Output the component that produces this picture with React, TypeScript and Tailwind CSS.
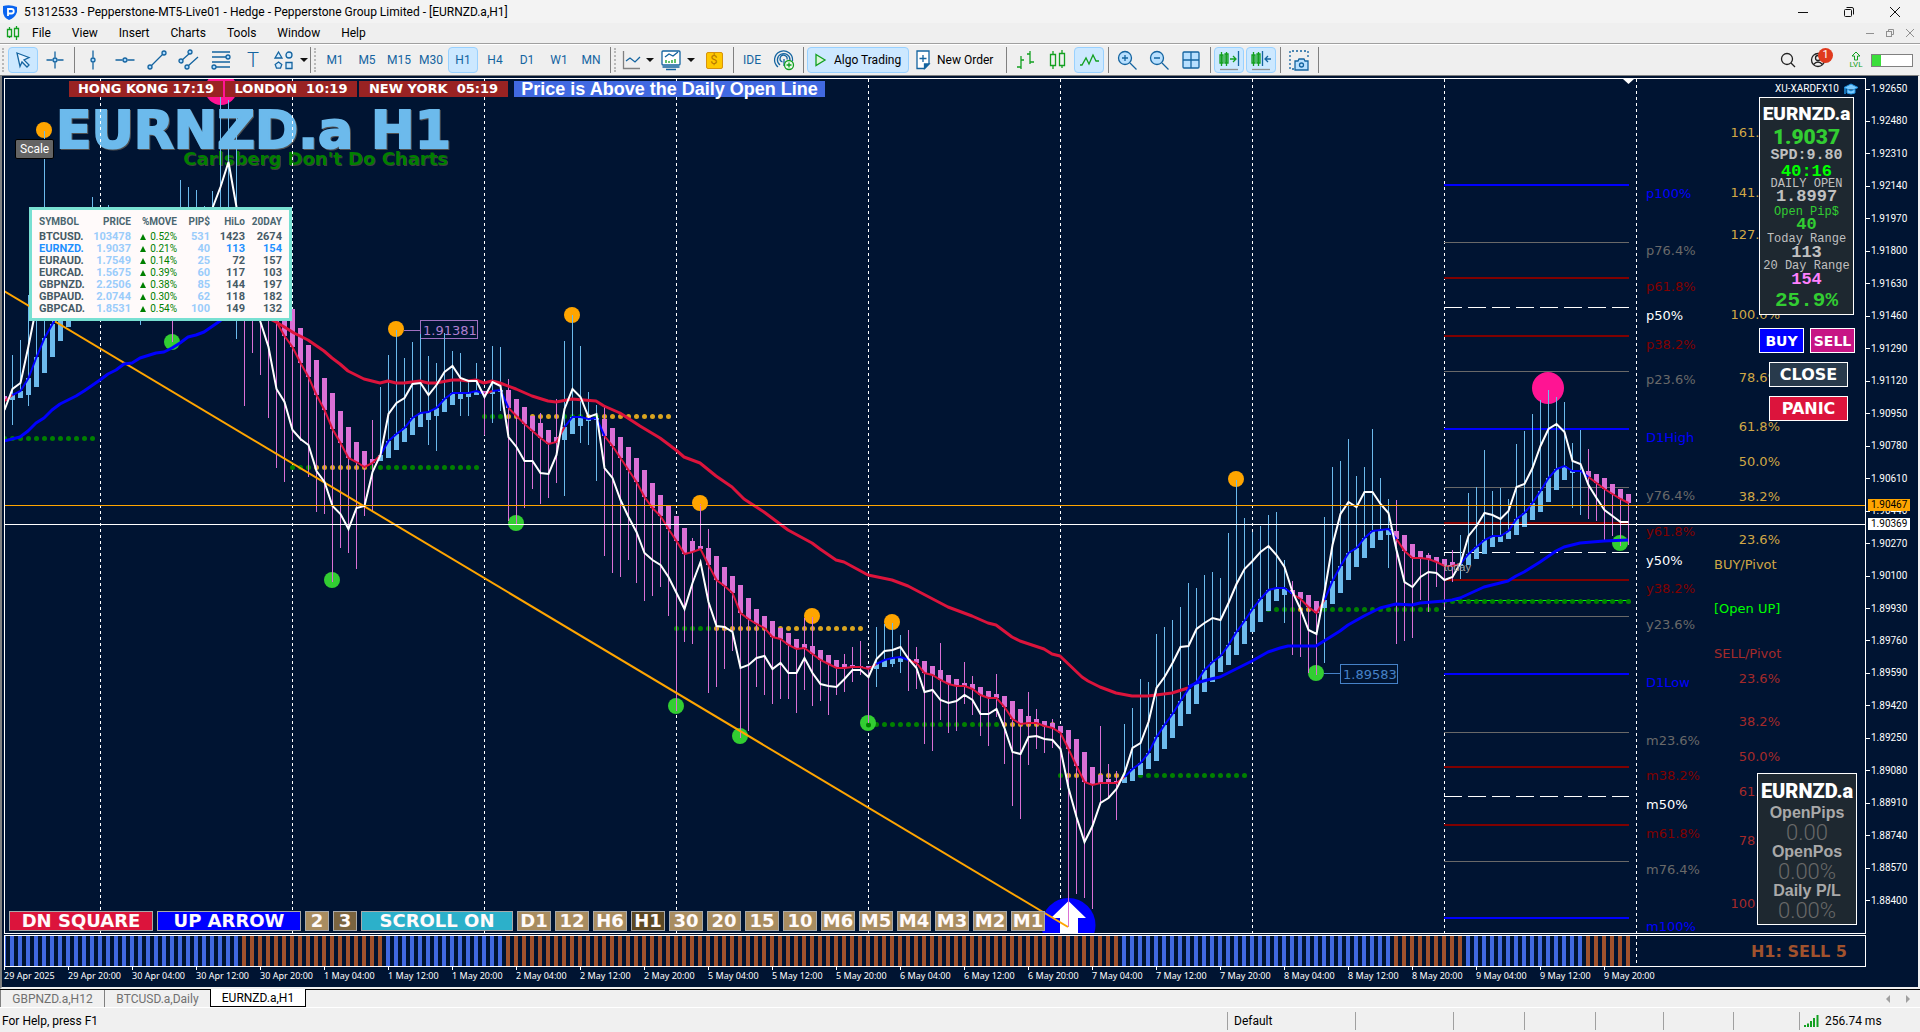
import type { ReactNode } from "react";

// ─────────────────────────────────────────────────────────────
// Chart data. One row per H1 bar, eight pixels apart:
// [wick top, wick bottom, fast average, body edge, close line]
// A body edge above the average is a falling bar, below it a rising one.
// ─────────────────────────────────────────────────────────────

type Bar = [number, number, number, number, number];

const BARS: Bar[] = [
  [396, 400, 401, 396, 410], [355, 425, 395, 400, 389], [340, 398, 391, 398, 383], [295, 406, 378, 395, 346],
  [300, 387, 357, 387, 306], [131, 373, 338, 373, 280], [260, 357, 324, 357, 270], [260, 341, 310, 341, 262],
  [250, 327, 300, 327, 256], [250, 315, 292, 310, 250], [240, 310, 285, 300, 246], [197, 310, 280, 292, 244],
  [240, 300, 276, 286, 244], [205, 300, 272, 282, 244], [240, 300, 270, 280, 246], [240, 300, 268, 278, 248],
  [240, 300, 266, 276, 250], [240, 325, 264, 274, 252], [240, 300, 262, 272, 254], [240, 300, 260, 270, 256],
  [240, 300, 260, 255, 258], [240, 342, 262, 256, 262], [180, 300, 260, 268, 260], [187, 300, 256, 266, 256],
  [190, 300, 250, 262, 250], [206, 300, 246, 258, 240], [191, 300, 240, 254, 208], [96, 300, 236, 250, 187],
  [100, 300, 232, 246, 162], [118, 339, 236, 244, 207], [240, 406, 262, 250, 250], [250, 353, 284, 262, 290],
  [260, 375, 302, 276, 322], [270, 418, 314, 286, 347], [280, 468, 322, 294, 389], [290, 482, 336, 300, 402],
  [309, 440, 347, 309, 430], [328, 441, 363, 328, 439], [345, 477, 377, 345, 445], [360, 512, 395, 360, 471],
  [378, 514, 410, 378, 482], [393, 582, 429, 393, 506], [411, 548, 443, 411, 514], [427, 553, 458, 427, 529],
  [442, 569, 462, 442, 508], [451, 516, 467, 451, 506], [420, 511, 463, 459, 472], [387, 461, 455, 461, 455],
  [355, 458, 441, 458, 414], [330, 450, 434, 450, 403], [358, 442, 428, 442, 398], [342, 435, 418, 435, 384],
  [334, 427, 413, 427, 383], [356, 445, 412, 420, 395], [363, 451, 408, 416, 385], [333, 412, 399, 412, 372],
  [351, 405, 393, 405, 366], [353, 416, 393, 399, 378], [380, 416, 393, 397, 381], [363, 395, 391, 395, 381],
  [391, 435, 394, 391, 397], [346, 423, 391, 394, 382], [347, 411, 390, 392, 386], [379, 521, 408, 390, 437],
  [399, 524, 416, 399, 447], [407, 508, 424, 407, 461], [416, 489, 431, 416, 461], [413, 504, 438, 423, 473],
  [430, 498, 444, 430, 474], [399, 483, 442, 437, 455], [341, 496, 427, 440, 409], [315, 434, 417, 434, 389],
  [346, 443, 417, 426, 397], [392, 445, 419, 421, 417], [405, 481, 418, 420, 414], [407, 556, 436, 419, 468],
  [428, 573, 446, 428, 478], [437, 577, 458, 437, 500], [447, 560, 470, 447, 517], [458, 583, 482, 458, 532],
  [470, 601, 497, 470, 553], [483, 596, 508, 483, 560], [495, 587, 516, 495, 565], [506, 616, 529, 506, 577],
  [516, 711, 541, 516, 593], [528, 642, 554, 528, 609], [538, 644, 552, 541, 583], [504, 550, 549, 546, 562],
  [529, 693, 565, 548, 602], [556, 687, 580, 556, 626], [567, 669, 586, 567, 627], [576, 651, 593, 576, 632],
  [585, 738, 613, 585, 668], [598, 731, 619, 598, 665], [609, 687, 624, 609, 658], [616, 695, 628, 616, 656],
  [621, 704, 637, 621, 669], [628, 699, 639, 628, 663], [633, 699, 645, 633, 673], [639, 713, 649, 639, 673],
  [618, 690, 648, 644, 658], [617, 706, 654, 646, 673], [650, 701, 660, 650, 684], [655, 715, 664, 655, 686],
  [660, 695, 668, 660, 687], [654, 692, 668, 664, 679], [647, 682, 667, 665, 670], [641, 675, 667, 666, 670],
  [666, 723, 669, 666, 677], [627, 687, 664, 669, 659], [624, 667, 660, 667, 651], [623, 667, 658, 664, 650],
  [635, 673, 657, 662, 647], [630, 691, 660, 659, 659], [647, 689, 663, 659, 668], [661, 744, 673, 661, 692],
  [666, 751, 675, 666, 690], [643, 720, 680, 670, 700], [675, 733, 684, 675, 703], [679, 731, 686, 679, 701],
  [662, 704, 686, 683, 695], [676, 715, 689, 684, 700], [687, 736, 695, 687, 714], [691, 746, 698, 691, 714],
  [674, 717, 698, 694, 709], [696, 764, 707, 696, 728], [701, 806, 719, 701, 752], [709, 819, 724, 709, 754],
  [692, 765, 723, 716, 737], [709, 749, 723, 719, 736], [721, 753, 726, 721, 739], [719, 748, 728, 723, 740],
  [726, 788, 733, 726, 749], [730, 927, 749, 730, 788], [739, 894, 766, 739, 817], [752, 898, 782, 752, 842],
  [767, 909, 785, 767, 826], [726, 805, 783, 775, 803], [764, 798, 783, 779, 798], [771, 820, 783, 781, 789],
  [724, 783, 777, 783, 773], [708, 781, 769, 781, 748], [679, 775, 763, 775, 743], [682, 769, 753, 769, 722],
  [634, 761, 737, 761, 688], [627, 749, 725, 749, 677], [620, 738, 714, 738, 663], [607, 726, 701, 726, 647],
  [583, 714, 689, 714, 646], [588, 704, 682, 704, 629], [575, 692, 670, 692, 623], [572, 682, 662, 682, 618],
  [578, 672, 656, 672, 620], [533, 665, 645, 665, 603], [480, 655, 632, 655, 584], [518, 644, 621, 644, 569],
  [532, 632, 609, 632, 561], [526, 622, 599, 622, 552], [515, 611, 590, 611, 546], [512, 601, 588, 601, 555],
  [560, 623, 588, 595, 567], [581, 655, 594, 590, 592], [592, 657, 599, 592, 609], [595, 673, 607, 595, 630],
  [601, 675, 613, 601, 634], [517, 663, 600, 608, 592], [467, 604, 581, 604, 545], [461, 593, 566, 593, 514],
  [439, 580, 553, 580, 502], [476, 567, 548, 567, 507], [467, 558, 538, 558, 492], [429, 548, 531, 548, 492],
  [478, 540, 530, 540, 504], [499, 568, 529, 535, 513], [500, 644, 539, 531, 550], [535, 641, 551, 535, 582],
  [544, 638, 558, 544, 587], [551, 600, 558, 551, 577], [553, 612, 559, 555, 572], [557, 587, 562, 557, 573],
  [559, 607, 566, 559, 580], [550, 582, 566, 562, 577], [535, 579, 564, 566, 563], [493, 565, 554, 565, 536],
  [487, 559, 547, 559, 526], [450, 554, 540, 554, 513], [491, 547, 536, 547, 515], [488, 542, 536, 542, 519],
  [499, 539, 531, 539, 511], [444, 535, 519, 535, 487], [431, 527, 513, 527, 484], [414, 520, 503, 520, 468],
  [400, 512, 491, 512, 446], [390, 502, 478, 502, 429], [397, 490, 469, 490, 424], [402, 480, 466, 480, 432],
  [443, 508, 471, 473, 461], [430, 515, 471, 472, 464], [449, 519, 477, 471, 485], [474, 521, 483, 474, 498],
  [478, 540, 489, 478, 510], [484, 536, 494, 484, 516], [489, 546, 499, 489, 522], [494, 545, 503, 494, 522],
];

const SLOW: { color: string; points: string }[] = [
  {
    color: "#0000ff",
    points:
      "4,441 20,437 28,431 36,423 44,418 52,410 60,404 76,396 84,391 100,380 108,374 116,370 124,364 132,363 140,358 156,353 164,352 172,348 180,343 188,337 196,335 204,332 220,321 236,305",
  },
  {
    color: "#dc143c",
    points:
      "260,314 276,322 286,328 294,333 308,340 324,351 332,358 340,364 348,371 364,379 372,381 380,383 388,381 396,383 404,383 420,381 428,383 436,383 452,380 460,380 468,381 476,380 484,383 492,381 500,383 516,389 532,396 548,401 556,402 572,399 596,401 604,406 620,413 640,426 660,438 676,450 684,457 700,463 716,476 732,487 744,499 764,512 788,530 812,543 820,549 836,560 844,562 868,575 892,580 908,586 948,607 972,616 988,623 996,625 1012,637 1020,641 1044,649 1052,654 1060,656 1082,677 1088,681 1100,687 1116,693 1132,696 1148,696 1172,693 1188,688",
  },
  {
    color: "#0000ff",
    points:
      "1188,687 1196,683 1211,679 1220,677 1236,669 1252,661 1268,652 1280,648 1288,646 1316,646 1332,636 1340,631 1348,625 1364,616 1380,608 1396,604 1412,605 1420,603 1444,601 1452,600 1460,598 1484,587 1508,581 1516,576 1524,572 1540,562 1556,551 1564,547 1580,543 1604,541 1628,540",
  },
];

// Daily open dots: y, first bar, and one letter per bar (g = above, y = below)
const OPEN_DOTS: [number, number, string][] = [
  [438, 0, "gggggggggggg"],
  [467, 36, "gggyyyyyyygggggggggggggg"],
  [416, 60, "gggyyyyyyygggygyyyyyyyyy"],
  [628, 84, "gggggyyyyyyyyyyyyyyyyyyy"],
  [724, 108, "gggggggggggggggggyyyyyyy"],
  [775, 132, "gyyyyyyygggggggggggggggg"],
  [609, 156, "ggggggyygggggggggggggggg"],
  [601, 180, "gggggggggggggggggggggggg"],
];

const MARKERS: [number, number, number, string][] = [
  [221, 89, 16, "#ff1493"], [1548, 388, 16, "#ff1493"],
  [44, 130, 8, "#ffa500"], [396, 329, 8, "#ffa500"], [572, 315, 8, "#ffa500"], [700, 503, 8, "#ffa500"],
  [812, 616, 8, "#ffa500"], [892, 622, 8, "#ffa500"], [1236, 479, 8, "#ffa500"],
  [172, 342, 8, "#32cd32"], [332, 580, 8, "#32cd32"], [516, 523, 8, "#32cd32"], [676, 706, 8, "#32cd32"],
  [740, 736, 8, "#32cd32"], [868, 723, 8, "#32cd32"], [1316, 673, 8, "#32cd32"], [1620, 543, 8, "#32cd32"],
];

const BLUE = "#0000ff";
const MAROON = "#800000";
const GREY = "#696969";

const LEVELS: [string, number, string][] = [
  ["p100%", 185, BLUE], ["p76.4%", 242, GREY], ["p61.8%", 278, MAROON], ["p50%", 307, "#ffffff"],
  ["p38.2%", 336, MAROON], ["p23.6%", 371, GREY], ["D1High", 429, BLUE], ["y76.4%", 487, GREY],
  ["y61.8%", 523, MAROON], ["y50%", 552, "#ffffff"], ["y38.2%", 580, MAROON], ["y23.6%", 616, GREY],
  ["D1Low", 674, BLUE], ["m23.6%", 732, GREY], ["m38.2%", 767, MAROON], ["m50%", 796, "#ffffff"],
  ["m61.8%", 825, MAROON], ["m76.4%", 861, GREY], ["m100%", 918, BLUE],
];

const PIVOTS: [string, number, string][] = [
  ["161.8%", 132, "#d0a846"], ["141.4%", 192, "#d0a846"], ["127.2%", 234, "#d0a846"], ["100.0%", 314, "#d0a846"],
  ["78.6%", 377, "#d0a846"], ["61.8%", 426, "#d0a846"], ["50.0%", 461, "#d0a846"], ["38.2%", 496, "#d0a846"],
  ["23.6%", 539, "#d0a846"], ["23.6%", 678, "#a52a2a"], ["38.2%", 721, "#a52a2a"], ["50.0%", 756, "#a52a2a"],
  ["61.8%", 791, "#a52a2a"], ["78.6%", 840, "#a52a2a"], ["100.0%", 903, "#a52a2a"],
];

const SYMBOL_ROWS = [
  ["BTCUSD.", "103478", "0.52%", "531", "1423", "2674"],
  ["EURNZD.", "1.9037", "0.21%", "40", "113", "154"],
  ["EURAUD.", "1.7549", "0.14%", "25", "72", "157"],
  ["EURCAD.", "1.5675", "0.39%", "60", "117", "103"],
  ["GBPNZD.", "2.2506", "0.38%", "85", "144", "197"],
  ["GBPAUD.", "2.0744", "0.30%", "62", "118", "182"],
  ["GBPCAD.", "1.8531", "0.54%", "100", "149", "132"],
];

const TIMES = [
  "29 Apr 2025", "29 Apr 20:00", "30 Apr 04:00", "30 Apr 12:00", "30 Apr 20:00",
  ...["1", "2", "5", "6", "7", "8", "9"].flatMap((d) => [`${d} May 04:00`, `${d} May 12:00`, `${d} May 20:00`]),
];

const PRICES = Array.from({ length: 26 }, (_, i) => (1.9265 - i * 0.0017).toFixed(5));

const TIMEFRAMES = ["M1", "M5", "M15", "M30", "H1", "H4", "D1", "W1", "MN"];
const MENUS = ["File", "View", "Insert", "Charts", "Tools", "Window", "Help"];
const TF_BUTTONS = ["D1", "12", "H6", "H1", "30", "20", "15", "10", "M6", "M5", "M4", "M3", "M2", "M1"];

const barX = (i: number) => 4.5 + i * 8;
const isUp = (b: Bar) => b[3] > b[2];

// Splits the fast average into runs of one direction so each gets its own colour.
function fastRuns() {
  const runs: { up: boolean; points: string[] }[] = [];
  BARS.forEach((b, i) => {
    const pt = `${barX(i)},${b[2]}`;
    const last = runs[runs.length - 1];
    if (last && last.up === isUp(b)) last.points.push(pt);
    else {
      if (last) last.points.push(pt);
      runs.push({ up: isUp(b), points: [pt] });
    }
  });
  return runs;
}

function PriceChart() {
  return (
    <svg
      viewBox="5 79 1860 854"
      preserveAspectRatio="none"
      className="block h-full w-full"
      role="img"
      aria-label="EURNZD.a H1 price chart"
    >
      <g className="font-['DejaVu_Sans',sans-serif]" fontWeight="bold">
        <text x="56" y="148" fontSize="52" fill="#6cbaec" stroke="#6cbaec" strokeWidth="2" className="drop-shadow-[1px_1px_0_#505050]">
          EURNZD.a H1
        </text>
        <text x="448" y="165" fontSize="18" fill="#008000" textAnchor="end" className="drop-shadow-[1px_1px_0_#404040]">
          Carlsberg Don't Do Charts
        </text>
      </g>

      <g stroke="#fff" strokeWidth="1" strokeDasharray="3 3" shapeRendering="crispEdges">
        {[100, 292, 484, 676, 868, 1060, 1252, 1444, 1636].map((x) => (
          <line key={x} x1={x + 0.5} x2={x + 0.5} y1="79" y2="933" />
        ))}
      </g>

      {/* Fibonacci levels */}
      <g shapeRendering="crispEdges">
        {LEVELS.map(([label, y, color]) => {
          const thick = color === BLUE || color === MAROON;
          return (
            <line
              key={label}
              x1="1444"
              x2="1629"
              y1={thick ? y : y + 0.5}
              y2={thick ? y : y + 0.5}
              stroke={color}
              strokeWidth={thick ? 2 : 1}
              strokeDasharray={color === "#ffffff" ? "18 6" : undefined}
            />
          );
        })}
        <line x1="1444" x2="1629" y1="600.5" y2="600.5" stroke="#00ff00" />
      </g>

      <g className="font-['DejaVu_Sans',sans-serif]" fontSize="13">
        {LEVELS.map(([label, y, color]) => (
          <text key={label} x="1646" y={y + 13} fill={color}>{label}</text>
        ))}
        {PIVOTS.map(([label, y, color]) => (
          <text key={y} x="1780" y={y + 5} fill={color} textAnchor="end">{label}</text>
        ))}
        <text x="1714" y="569" fill="#d0a846">BUY/Pivot</text>
        <text x="1714" y="613" fill="#00ff00">[Open UP]</text>
        <text x="1714" y="658" fill="#a52a2a">SELL/Pivot</text>
        <g stroke="#a070c0" fill="none" shapeRendering="crispEdges">
          <path d="M404 330.5H420M420.5 320.5h57v18h-57z" />
          <path d="M1324 673.5H1340M1340.5 664.5h57v19h-57z" stroke="#4682c8" />
        </g>
        <text x="423" y="335" fill="#b07fd0">1.91381</text>
        <text x="1343" y="679" fill="#4682c8">1.89583</text>
      </g>

      {OPEN_DOTS.map(([y, start, marks]) =>
        marks.split("").map((m, k) => (
          <circle key={`${y}-${k}`} cx={barX(start + k)} cy={y + 0.5} r="2.5" fill={m === "g" ? "#008000" : "#daa520"} />
        )),
      )}

      {MARKERS.map(([x, y, r, color]) => (
        <circle key={`${x}-${y}`} cx={x} cy={y} r={r} fill={color} />
      ))}
      <circle cx="868.5" cy="725" r="2.5" fill="#008000" />
      <circle cx="1068.5" cy="925" r="27" fill="#0000ff" />
      <path d="M1068.5 901L1086 918H1078V934H1060V918H1051Z" fill="#fff" />

      <g shapeRendering="crispEdges">
        {BARS.map((b, i) => {
          const color = isUp(b) ? "#6cbaec" : "#da70d6";
          return (
            <g key={i}>
              <line x1={barX(i)} x2={barX(i)} y1={b[0]} y2={b[1]} stroke={color} />
              <rect x={barX(i) - 2.5} y={Math.min(b[2], b[3])} width="5" height={Math.abs(b[3] - b[2])} fill={color} />
            </g>
          );
        })}
      </g>

      <line x1="4" y1="291" x2="1068" y2="927" stroke="#ffa500" strokeWidth="2" />

      {SLOW.map((s) => (
        <polyline key={s.points} points={s.points} fill="none" stroke={s.color} strokeWidth="3" strokeLinejoin="round" />
      ))}
      {fastRuns().map((run) => (
        <polyline
          key={run.points[0]}
          points={run.points.join(" ")}
          fill="none"
          stroke={run.up ? "#0000ff" : "#dc143c"}
          strokeWidth="2"
        />
      ))}
      <polyline points={BARS.map((b, i) => `${barX(i)},${b[4]}`).join(" ")} fill="none" stroke="#fff" strokeWidth="2" />

      <g shapeRendering="crispEdges">
        <line x1="4" x2="1866" y1="505.5" y2="505.5" stroke="#ffa500" />
        <line x1="4" x2="1866" y1="524.5" y2="524.5" stroke="#fff" />
      </g>
      <text x="1444" y="571" fontSize="11" fill="#a9a9a9" className="font-['Liberation_Sans',sans-serif]">today</text>
      <path d="M1623 79h11l-5.500 5z" fill="#fff" />
    </svg>
  );
}

// ─────────────────────────────────────────────────────────────
// Chart overlays
// ─────────────────────────────────────────────────────────────

function SessionBar() {
  return (
    <div className="absolute top-0.5 left-16 flex h-4 items-center gap-0.5 font-['DejaVu_Sans',sans-serif] text-[13px] leading-4 font-bold whitespace-pre text-white">
      <span className="w-[154px] bg-[#992323] text-center">HONG KONG 17:19</span>
      <span className="w-[132px] bg-[#992323] text-center">LONDON  10:19</span>
      <span className="w-[149px] bg-[#992323] text-center">NEW YORK  05:19</span>
      <span className="ml-1 w-[311px] bg-[#4169e1] text-center font-['Liberation_Sans',sans-serif] text-lg leading-4 font-bold">
        Price is Above the Daily Open Line
      </span>
    </div>
  );
}

function SymbolTable() {
  const cell = "p-0 text-right leading-3";
  return (
    <div className="absolute top-32 left-6 w-[263px] border-[3px] border-[#78e0d2] bg-[#fffafa] px-[7px] py-[3px] font-['Roboto',sans-serif] text-[11px] font-bold text-[#465a66]">
      <table className="w-[243px] table-fixed border-collapse whitespace-nowrap">
        <colgroup>
          <col className="w-[46px]" />
          <col className="w-[46px]" />
          <col className="w-[46px]" />
          <col className="w-[33px]" />
          <col className="w-[35px]" />
          <col />
        </colgroup>
        <thead>
          <tr className="h-[18px] text-[10px] leading-3 text-[#4a6670]">
            <th className="p-0 text-left">SYMBOL</th>
            <th className="p-0 text-right">PRICE</th>
            <th className="p-0 text-right">%MOVE</th>
            <th className="p-0 text-right">PIP$</th>
            <th className="p-0 text-right">HiLo</th>
            <th className="p-0 text-right">20DAY</th>
          </tr>
        </thead>
        <tbody>
          {SYMBOL_ROWS.map(([symbol, price, move, pips, hilo, day]) => (
            <tr key={symbol} className={symbol === "EURNZD." ? "h-3 text-[#1e90ff]" : "h-3"}>
              <td className="p-0 text-left leading-3">{symbol}</td>
              <td className={`${cell} text-[#9accfa]`}>{price}</td>
              <td className={`${cell} text-[#008000]`}>
                <span className="flex items-center justify-end gap-1 text-[10px] font-normal">
                  <svg viewBox="0 0 6 6" className="h-1.5 w-1.5" aria-hidden>
                    <path d="M3 0l3 6H0z" fill="#008000" />
                  </svg>
                  {move}
                </span>
              </td>
              <td className={`${cell} text-[#9accfa]`}>{pips}</td>
              <td className={cell}>{hilo}</td>
              <td className={cell}>{day}</td>
            </tr>
          ))}
        </tbody>
      </table>
    </div>
  );
}

const HEAVY = "font-['Roboto','Liberation_Sans',sans-serif] font-black";

function QuotePanel() {
  return (
    <section className="absolute top-[18px] right-[11px] flex h-[218px] w-[95px] flex-col items-center border border-white bg-[#1e2830] pt-1 font-['Liberation_Mono',monospace] font-bold whitespace-nowrap text-[#c0c0c0]">
      <h2 className={`${HEAVY} text-[19px] leading-6 text-white`}>EURNZD.a</h2>
      <p className={`${HEAVY} text-[21px] leading-[22px] text-[#32cd32]`}>1.9037</p>
      <p className="text-[15px] leading-4">SPD:9.80</p>
      <p className="text-[17px] leading-[15px] text-[#00ff00]">40:16</p>
      <p className="text-xs leading-[11px] font-normal">DAILY OPEN</p>
      <p className="text-[17px] leading-[14px]">1.8997</p>
      <p className="pt-0.5 text-xs leading-3 font-normal text-[#32cd32]">Open Pip$</p>
      <p className="text-[17px] leading-[14px] text-[#32cd32]">40</p>
      <p className="text-xs leading-[14px] font-normal">Today Range</p>
      <p className="text-[17px] leading-[14px]">113</p>
      <p className="text-xs leading-[13px] font-normal">20 Day Range</p>
      <p className="text-[17px] leading-[14px] text-[#ff80ff]">154</p>
      <p className="pt-0.5 text-[21px] leading-6 text-[#32cd32]">25.9%</p>
    </section>
  );
}

function TradeButtons() {
  const base = "h-[25px] border border-white font-['DejaVu_Sans',sans-serif] font-bold text-white";
  return (
    <div className="absolute top-[249px] right-2.5 flex w-24 flex-col gap-[9px]">
      <div className="flex justify-between">
        <button className={`${base} w-[45px] bg-[#0000ff] text-sm leading-5`}>BUY</button>
        <button className={`${base} w-[45px] bg-[#c71585] text-sm leading-5`}>SELL</button>
      </div>
      <div className="flex flex-col gap-[9px] pr-[7px] pl-2.5">
        <button className={`${base} bg-[#283a4c] text-base leading-5`}>CLOSE</button>
        <button className={`${base} bg-[#dc143c] text-base leading-5`}>PANIC</button>
      </div>
    </div>
  );
}

function PositionPanel() {
  const label = "text-base leading-5 font-bold text-[#a9a9a9]";
  const value = "font-['Roboto','Liberation_Sans',sans-serif] text-[22px] leading-[19px] font-light text-[#696969]";
  return (
    <section className="absolute right-2 bottom-2 flex h-[152px] w-[100px] flex-col items-center border border-white bg-[#1e2830] pt-[5px] font-['Liberation_Sans',sans-serif] whitespace-nowrap">
      <h2 className={`${HEAVY} text-xl leading-6 text-white`}>EURNZD.a</h2>
      <p className={label}>OpenPips</p>
      <p className={value}>0.00</p>
      <p className={label}>OpenPos</p>
      <p className={value}>0.00%</p>
      <p className={label}>Daily P/L</p>
      <p className={value}>0.00%</p>
    </section>
  );
}

function ChartButtons() {
  const base = "h-5 border border-[#a9a9a9] font-['DejaVu_Sans',sans-serif] leading-4 font-bold text-[#fffafa]";
  return (
    <div className="absolute bottom-0.5 left-1 flex gap-1 text-center text-lg whitespace-nowrap">
      <button className={`${base} w-36 bg-[#dc143c]`}>DN SQUARE</button>
      <button className={`${base} w-36 bg-[#0000ff]`}>UP ARROW</button>
      <button className={`${base} w-6 bg-[#a88c60]`}>2</button>
      <button className={`${base} w-6 bg-[#7a6440]`}>3</button>
      <button className={`${base} w-38 bg-[#2cb0ca]`}>SCROLL ON</button>
      {TF_BUTTONS.map((tf) => (
        <button key={tf} className={`${base} w-[34px] ${tf === "H1" ? "bg-[#5c4824]" : "bg-[#a88c60]"}`}>
          {tf}
        </button>
      ))}
    </div>
  );
}

function SignalHistogram() {
  const isBuy = (i: number) => i < 30 || (i > 47 && i < 63) || (i > 139 && i < 174) || (i > 182 && i < 198);
  return (
    <svg viewBox="5 936 1860 30" preserveAspectRatio="none" className="block h-full w-full" shapeRendering="crispEdges">
      {BARS.map((_, i) => (
        <rect key={i} x={2 + i * 8} y="936" width="4" height="30" fill={isBuy(i) ? "#4169e1" : "#a0522d"} />
      ))}
      <line x1="1636.5" x2="1636.5" y1="936" y2="966" stroke="#fff" strokeDasharray="3 3" />
    </svg>
  );
}

function PriceAxis() {
  return (
    <div className="relative w-[52px] shrink-0 font-['Roboto','Liberation_Sans',sans-serif] text-[10px] text-white">
      <ul className="flex h-full flex-col justify-between pt-[5px] pb-[27px]">
        {PRICES.map((p) => (
          <li key={p} className="flex h-3 items-center gap-px leading-3">
            <span className="h-px w-1 bg-white" />
            {p}
          </li>
        ))}
      </ul>
      <span className="absolute top-[421px] left-0.5 bg-[#ffa500] px-[3px] leading-3 text-black">1.90467</span>
      <span className="absolute top-[440px] left-0.5 bg-white px-[3px] leading-3 text-black">1.90369</span>
    </div>
  );
}

// ─────────────────────────────────────────────────────────────
// Toolbar
// ─────────────────────────────────────────────────────────────

function Glyph({ children, color = "#1464a0" }: { children: ReactNode; color?: string }) {
  return (
    <svg viewBox="0 0 24 24" className="h-6 w-6 shrink-0" fill="none" stroke={color} strokeWidth="1.3" aria-hidden>
      {children}
    </svg>
  );
}

function Tool({ label, active, children }: { label: string; active?: boolean; children: ReactNode }) {
  return (
    <button
      aria-label={label}
      className={`flex h-[26px] w-[30px] shrink-0 items-center justify-center rounded-sm border text-[#1464a0] ${
        active ? "border-[#99d1ff] bg-[#cce8ff]" : "border-transparent"
      }`}
    >
      {children}
    </button>
  );
}

const Sep = () => (
  <span className="flex h-[26px] w-1 shrink-0 justify-center">
    <span className="w-px bg-[#808080]" />
  </span>
);

const Grip = () => <span className="h-6 w-1 shrink-0 border-l-2 border-dotted border-[#b8b8b8]" />;

const Caret = () => (
  <svg viewBox="0 0 8 4" className="h-1 w-2 shrink-0" aria-hidden>
    <path d="M0 0h8L4 4z" fill="#111" />
  </svg>
);

function Toolbar() {
  return (
    <div className="flex h-[31px] shrink-0 items-center gap-0.5 border-t border-white bg-[#efefef] pr-1.5 pl-0.5 text-xs">
      <Grip />
      <Tool label="Cursor" active>
        <Glyph><path d="M6 5l12 4.500-5 2.500 5 5-2 2-5-5-2 4.500z" fill="#e8f4ff" /></Glyph>
      </Tool>
      <Tool label="Crosshair">
        <Glyph><path d="M3.500 12h6m5 0h6M12 3.500v6m0 5v6" /><circle cx="12" cy="12" r="2" fill="#a8d8ff" /></Glyph>
      </Tool>
      <Sep />
      <Tool label="Vertical line">
        <Glyph><path d="M12 2.500v7m0 5v7" /><circle cx="12" cy="12" r="2" fill="#a8d8ff" /></Glyph>
      </Tool>
      <Tool label="Horizontal line">
        <Glyph><path d="M2.500 12h7m5 0h7" /><circle cx="12" cy="12" r="2" fill="#a8d8ff" /></Glyph>
      </Tool>
      <Tool label="Trend line">
        <Glyph><path d="M6 18L18 6" /><circle cx="5" cy="19" r="2" fill="#a8d8ff" /><circle cx="19" cy="5" r="2" fill="#a8d8ff" /></Glyph>
      </Tool>
      <Tool label="Channel">
        <Glyph>
          <path d="M4 13L13 5M11 18L21 9" />
          <circle cx="4" cy="13" r="2" fill="#a8d8ff" /><circle cx="13" cy="4" r="2" fill="#a8d8ff" /><circle cx="10" cy="19" r="2" fill="#a8d8ff" />
        </Glyph>
      </Tool>
      <Tool label="Fibonacci">
        <Glyph>
          <path d="M3 4h18M3 9h14M3 14h18M7 19h14" />
          <circle cx="19" cy="9" r="2" fill="#a8d8ff" /><circle cx="5" cy="19" r="2" fill="#a8d8ff" />
        </Glyph>
      </Tool>
      <Tool label="Text label">
        <span className="text-xl leading-6 font-light">T</span>
      </Tool>
      <button aria-label="Shapes" className="flex w-9 shrink-0 items-center gap-1 pl-0.5">
        <Glyph>
          <path d="M6.500 4l3.500 6H3z" fill="#d8eeff" /><circle cx="17" cy="7" r="3" fill="#d8eeff" />
          <path d="M6.500 14l3.300 2.500-1.300 3.700h-4l-1.300-3.700z" fill="#d8eeff" /><path d="M14 14.500h6v6h-6z" fill="#d8eeff" />
        </Glyph>
        <Caret />
      </button>
      <Sep />
      <Grip />
      {TIMEFRAMES.map((tf) => (
        <Tool key={tf} label={tf} active={tf === "H1"}>{tf}</Tool>
      ))}
      <Sep />
      <Grip />
      <button aria-label="Chart type" className="flex w-[37px] shrink-0 items-center gap-0.5">
        <Glyph><path d="M3.500 3v17.500H20" stroke="#808080" /><path d="M6 13l4-3 5 4 5-5" /></Glyph>
        <Caret />
      </button>
      <button aria-label="Templates" className="flex w-[38px] shrink-0 items-center gap-1">
        <Glyph>
          <rect x="3" y="3" width="18" height="14" rx="1" fill="#fff" /><path d="M6 9l4-3 4 2 5-4M3.500 19h17M7 21.500h10" />
          <path d="M7 15v-3m3 3v-2m3 2v-3m3 3v-4" stroke="#12a020" />
        </Glyph>
        <Caret />
      </button>
      <Tool label="Symbols">
        <span className="flex h-[17px] w-[17px] items-center justify-center rounded-xs border border-[#d8940c] bg-[#ffc800] text-[13px] leading-4 text-[#b87800]">
          $
        </span>
      </Tool>
      <Sep />
      <Tool label="IDE">IDE</Tool>
      <Tool label="Signals">
        <Glyph>
          <path d="M6 19A9 9 0 1 1 20.500 13M8 17A6.300 6.300 0 1 1 18 12M10.500 14A3.500 3.500 0 1 1 15 11.500M12 11v7" />
          <circle cx="17" cy="17" r="4.500" fill="#eafbe8" stroke="#12a020" /><path d="M17 14.500v5M14.500 17h5" stroke="#12a020" />
        </Glyph>
      </Tool>
      <Sep />
      <button className="flex h-[26px] w-[102px] shrink-0 items-center gap-1 rounded-sm border border-[#99d1ff] bg-[#cce8ff] pl-0.5 whitespace-nowrap">
        <svg viewBox="0 0 20 20" className="h-5 w-5 shrink-0" aria-hidden>
          <path d="M6 4.500l9 5.500-9 5.500z" fill="#d8f5d8" stroke="#12a020" strokeWidth="1.300" />
        </svg>
        Algo Trading
      </button>
      <button className="flex h-[26px] w-[91px] shrink-0 items-center gap-0.5 whitespace-nowrap">
        <Glyph>
          <path d="M6 3h12v13l-4.500 4.500H6z" fill="#fff" /><path d="M18 16h-4.500v4.500z" fill="#1464a0" /><path d="M12 7v7M8.500 10.500h7" />
        </Glyph>
        New Order
      </button>
      <Sep />
      <Tool label="Bars">
        <Glyph color="#12a020"><path d="M8 8v13M8 12h3M4 19h4M17 3v13M17 6h-3M17 14h4" /></Glyph>
      </Tool>
      <Tool label="Candles">
        <Glyph color="#12a020"><path d="M8 3v3m0 12v3M17 2v3m0 12v3M5.500 6.500h5v11h-5zM14.500 5.500h5v12h-5z" /></Glyph>
      </Tool>
      <Tool label="Line" active>
        <Glyph color="#12a020"><path d="M3 17h2l4-7 3 6 4-9 3 6h3" /></Glyph>
      </Tool>
      <Sep />
      <Tool label="Zoom in">
        <Glyph><circle cx="10" cy="10" r="6.500" fill="#b8e0ff" /><path d="M15 15l6.500 6.500M10 7v6M7 10h6" /></Glyph>
      </Tool>
      <Tool label="Zoom out">
        <Glyph><circle cx="10" cy="10" r="6.500" fill="#b8e0ff" /><path d="M15 15l6.500 6.500M7 10h6" /></Glyph>
      </Tool>
      <Tool label="Tile windows">
        <Glyph><rect x="4" y="4" width="16" height="16" rx="1" fill="#b8e0ff" /><path d="M12 4v16M4 12h16" /></Glyph>
      </Tool>
      <Sep />
      <Tool label="Shift chart" active>
        <Glyph color="#12a020">
          <path d="M4.500 4v14M9.500 4v14M3 7h3v8H3zM8 6h3v9H8zM13 11h6m-3-3l3 3-3 3" /><path d="M21.500 3v15" stroke="#1464a0" />
          <path d="M3 21.500h18" stroke="#909090" />
        </Glyph>
      </Tool>
      <Tool label="Auto scroll" active>
        <Glyph color="#12a020">
          <path d="M4.500 4v14M9.500 4v14M3 7h3v8H3zM8 6h3v9H8z" /><path d="M13.500 3v15M22 11h-6m3-3l-3 3 3 3" stroke="#1464a0" />
          <path d="M3 21.500h18" stroke="#909090" />
        </Glyph>
      </Tool>
      <Sep />
      <Tool label="Screenshot">
        <Glyph>
          <path d="M7 21H3V3h18v6" strokeDasharray="2 2" />
          <path d="M8 13h3l1-2h5l1 2h3v9H8z" fill="#b8e0ff" /><circle cx="14.500" cy="17" r="2" />
        </Glyph>
      </Tool>
      <Sep />
      <span className="flex-1" />
      <button aria-label="Search" className="mr-1">
        <Glyph color="#222"><circle cx="11" cy="11" r="5.500" /><path d="M15 15l4 4" /></Glyph>
      </button>
      <button aria-label="Account" className="relative mr-3 flex">
        <Glyph color="#222"><circle cx="12" cy="12" r="6.500" /><circle cx="12" cy="10" r="2.500" /><path d="M7.500 16.500q4.500-5 9 0" /></Glyph>
        <span className="absolute top-0 left-3 flex h-[15px] w-[15px] items-center justify-center rounded-full bg-[#e03a1e] text-[11px] text-white">
          1
        </span>
      </button>
      <span className="mr-px flex w-6 flex-col items-center text-[8px] leading-2 text-[#12a020]">
        <svg viewBox="0 0 10 10" className="h-2.5 w-2.5" fill="none" stroke="#12a020" aria-hidden>
          <path d="M5 1l4 4H6.500v4h-3V5H1z" />
        </svg>
        LVL
      </span>
      <span className="mr-px flex h-[13px] w-[42px] border border-[#808080] bg-white">
        <span className="w-[9px] bg-[#3ade3a]" />
      </span>
    </div>
  );
}

export default function App() {
  return (
    <div className="flex h-screen w-full flex-col overflow-hidden bg-[#f0f0f0] font-['Roboto','Noto_Sans',sans-serif] text-xs text-black">
      <header className="flex h-[23px] shrink-0 items-center bg-[#f3f3f3] pl-0.5">
        <svg viewBox="0 0 16 16" className="h-4 w-4" aria-hidden>
          <path d="M1 2Q8 0 15 3V8Q13 14 7 16Q1 13 1 8Z" fill="#0a64f0" />
          <path d="M6 12V5h3.500a2.200 2.200 0 0 1 0 4.500H6" fill="none" stroke="#fff" strokeWidth="1.800" />
        </svg>
        <h1 className="pl-1.5 text-xs whitespace-nowrap">
          51312533 - Pepperstone-MT5-Live01 - Hedge - Pepperstone Group Limited - [EURNZD.a,H1]
        </h1>
        <div className="ml-auto flex h-full items-center gap-9 pr-5">
          <button aria-label="Minimize"><svg viewBox="0 0 10 10" className="h-2.5 w-2.5" stroke="#111"><path d="M0 5.500h10" /></svg></button>
          <button aria-label="Restore">
            <svg viewBox="0 0 10 10" className="h-2.5 w-2.5" fill="none" stroke="#111"><rect x=".5" y="2.500" width="7" height="7" rx="1" /><path d="M2.500 .5h5.500a1.500 1.500 0 0 1 1.500 1.500v5.500" /></svg>
          </button>
          <button aria-label="Close"><svg viewBox="0 0 10 10" className="h-2.5 w-2.5" stroke="#111"><path d="M0 0l10 10M10 0L0 10" /></svg></button>
        </div>
      </header>

      <nav className="flex h-[21px] shrink-0 items-center border-b border-[#a0a0a0] bg-[#efefef] pl-1.5">
        <svg viewBox="0 0 14 14" className="h-3.5 w-3.5" fill="none" stroke="#12a020" strokeWidth="1.300" aria-hidden>
          <path d="M3.500 1v2m0 7v2M1.500 3.500h4v7h-4zM10.500 0v2m0 9v3M8.500 2.500h4v8h-4z" />
        </svg>
        <ul className="flex gap-[21px] pl-3">
          {MENUS.map((m) => (
            <li key={m}><button className="leading-4">{m}</button></li>
          ))}
        </ul>
        <div className="ml-auto flex items-center gap-3 pr-1.5 text-[#909090]">
          <svg viewBox="0 0 8 8" className="h-2 w-2" stroke="currentColor"><path d="M0 4.500h8" /></svg>
          <svg viewBox="0 0 8 8" className="h-2 w-2" fill="none" stroke="currentColor"><rect x=".5" y="2.500" width="5" height="5" /><path d="M2.500 2V.5h5v5H6" /></svg>
          <svg viewBox="0 0 8 8" className="h-2 w-2" stroke="currentColor"><path d="M0 0l8 8M8 0L0 8" /></svg>
        </div>
      </nav>

      <Toolbar />

      <main className="flex min-h-0 flex-1 flex-col border-t border-r-2 border-b-2 border-l-2 border-t-[#808080] border-r-[#f0f0f0] border-b-[#f0f0f0] border-l-[#808080] bg-[#001432] pt-0.5 pl-0.5">
        <div className="flex min-h-0 flex-1">
          <div className="relative min-w-0 flex-1 border border-white">
            <PriceChart />
            <SessionBar />
            <span className="absolute top-[60px] left-2.5 rounded-xs border border-black bg-[#646464] px-1 text-xs leading-[18px] text-white">
              Scale
            </span>
            <SymbolTable />
            <p className="absolute top-1 right-1.5 flex items-center gap-1 text-[10px] leading-3 text-white">
              XU-XARDFX10
              <svg viewBox="0 0 16 12" className="h-3 w-4" aria-hidden>
                <path d="M8 1l7 3.500L8 8 1 4.500zM4 6.500V10q4 2 8 0V6.500" fill="#7ccbff" stroke="#1e90e0" />
                <path d="M2 5v6" stroke="#1e90e0" strokeWidth="1.500" />
              </svg>
            </p>
            <QuotePanel />
            <TradeButtons />
            <PositionPanel />
            <ChartButtons />
          </div>
          <PriceAxis />
        </div>

        <div className="relative mt-px mr-[52px] h-8 shrink-0 border border-white">
          <SignalHistogram />
          <p className="absolute top-1 right-[18px] font-['DejaVu_Sans',sans-serif] text-base leading-6 font-bold text-[#a0522d]">
            H1: SELL 5
          </p>
        </div>

        <ol className="flex h-5 shrink-0 font-['Noto_Sans',sans-serif] text-[9px] leading-3 whitespace-nowrap text-white">
          {TIMES.map((t) => (
            <li key={t} className="w-16 shrink-0">
              <span className="block h-[3px] w-px bg-white" />
              {t}
            </li>
          ))}
        </ol>
      </main>

      <div className="flex h-[19px] shrink-0 items-start border-t border-b border-t-black border-b-white text-[#707070]">
        <button className="h-[17px] w-[104px] border-l border-[#808080] leading-[18px]">GBPNZD.a,H12</button>
        <button className="h-[17px] w-[106px] border-l border-[#808080] leading-[18px]">BTCUSD.a,Daily</button>
        <button className="-mt-px h-[18px] w-24 border border-t-0 border-black bg-white leading-[18px] text-black">EURNZD.a,H1</button>
        <div className="ml-auto flex h-full items-center gap-4 pr-2.5">
          <svg viewBox="0 0 4 8" className="h-2 w-1" aria-label="Scroll left"><path d="M4 0v8L0 4z" fill="#a0a0a0" /></svg>
          <svg viewBox="0 0 4 8" className="h-2 w-1" aria-label="Scroll right"><path d="M0 0v8l4-4z" fill="#a0a0a0" /></svg>
        </div>
      </div>

      <footer className="flex h-6 shrink-0 items-center pt-0.5 pl-0.5">
        <span className="flex-1">For Help, press F1</span>
        <span className="h-[18px] w-32 border-l border-[#a0a0a0] pl-1.5 leading-[18px]">Default</span>
        <span className="h-[18px] w-[98px] border-l border-[#a0a0a0]" />
        <span className="h-[18px] w-[71px] border-l border-[#a0a0a0]" />
        <span className="h-[18px] w-[71px] border-l border-[#a0a0a0]" />
        <span className="h-[18px] w-[68px] border-l border-[#a0a0a0]" />
        <span className="h-[18px] w-[70px] border-l border-[#a0a0a0]" />
        <span className="h-[18px] w-[66px] border-l border-[#a0a0a0]" />
        <span className="flex h-[18px] w-[121px] items-center gap-1.5 border-l border-[#a0a0a0] pl-1">
          <svg viewBox="0 0 15 12" className="h-3 w-[15px]" stroke="#12a020" strokeWidth="2" aria-hidden>
            <path d="M1 12v-2M4 12V8.500M7 12V6M10 12V3M13.500 12V0" />
          </svg>
          256.74 ms
        </span>
      </footer>
    </div>
  );
}
